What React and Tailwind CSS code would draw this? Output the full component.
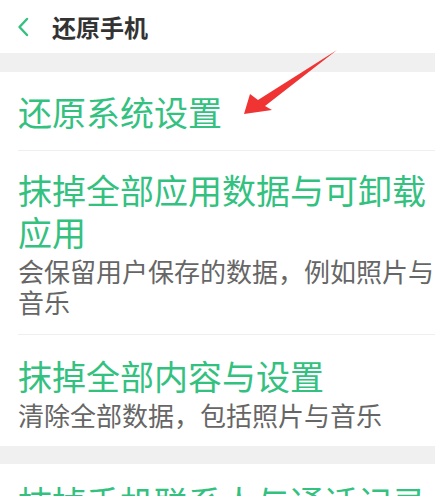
import React from "react";

const FONT = { fontFamily: '"Noto Sans CJK SC", "Noto Sans", sans-serif' };

function Item({ title, desc, className = "" }) {
  return (
    <div className={"pr-0 " + className}>
      <p className="text-[34px] leading-[42px] text-[#33c17f]">{title}</p>
      {desc && <p className="mt-[2px] text-[26px] leading-[31px] text-[#666666]">{desc}</p>}
    </div>
  );
}

export default function App() {
  return (
    <div className="relative w-[435px] h-[496px] overflow-hidden bg-white" style={FONT}>
      {/* header */}
      <div className="flex h-[53px] items-center bg-white pl-[17px]">
        <svg width="12" height="20" viewBox="0 0 12 20" className="mr-[23px]">
          <path d="M10 2 L2.5 10 L10 18" fill="none" stroke="#33c17f" strokeWidth="2.4" strokeLinecap="round" strokeLinejoin="round" />
        </svg>
        <h1 className="text-[24px] font-bold leading-none text-[#333333]">还原手机</h1>
      </div>

      <div className="h-[19px] bg-[#f0f0f0]" />

      <div className="bg-white pl-[18px]">
        <Item title="还原系统设置" className="pt-[19px] pb-[17px] border-b border-[#efefef]" />
        <Item
          title="抹掉全部应用数据与可卸载应用"
          desc="会保留用户保存的数据，例如照片与音乐"
          className="pt-[18px] pb-[17px] border-b border-[#efefef]"
        />
        <Item
          title="抹掉全部内容与设置"
          desc="清除全部数据，包括照片与音乐"
          className="pt-[20px] pb-[16px]"
        />
      </div>

      <div className="h-[18px] bg-[#f0f0f0]" />

      <div className="bg-white pl-[18px]">
        <Item title="抹掉手机联系人与通话记录" className="pt-[17px]" />
      </div>

      {/* red annotation arrow */}
      <svg className="absolute left-0 top-0" width="435" height="160" viewBox="0 0 435 160">
        <polygon
          points="244,114 250,94 258,100 337,50 265,106 272,110"
          fill="#f03333"
        />
      </svg>
    </div>
  );
}
